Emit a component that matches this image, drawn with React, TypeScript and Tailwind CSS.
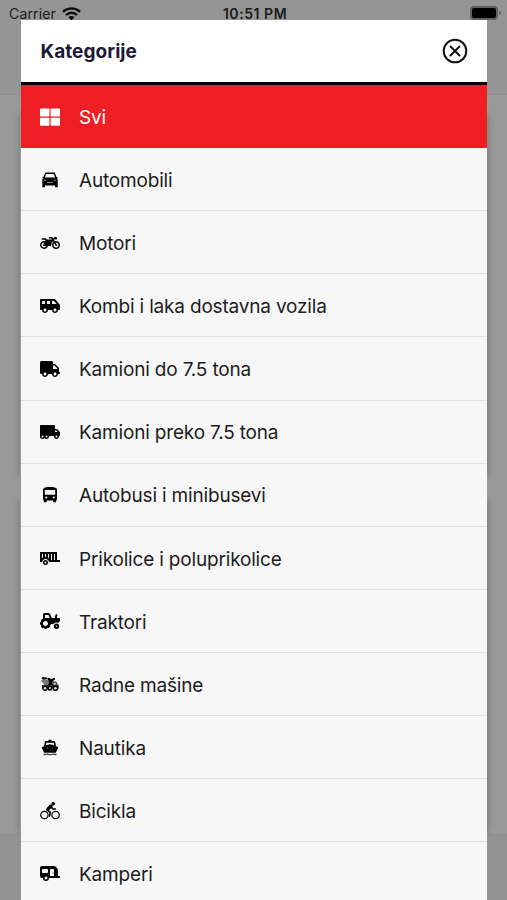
import type { ReactNode } from 'react';
import {
  FaCaravan,
  FaMotorcycle,
  FaShuttleVan,
  FaTractor,
  FaTrailer,
  FaTruck,
  FaTruckMoving,
} from 'react-icons/fa';

interface Category {
  id: string;
  name: string;
  icon: ReactNode;
}

const GridIcon = () => (
  <svg viewBox="0 0 20 18" className="w-5 h-[18px]" fill="currentColor">
    <rect x="0" y="0.5" width="9.4" height="8" rx="0.8" />
    <rect x="10.6" y="0.5" width="9.4" height="8" rx="0.8" />
    <rect x="0" y="9.7" width="9.4" height="8" rx="0.8" />
    <rect x="10.6" y="9.7" width="9.4" height="8" rx="0.8" />
  </svg>
);

const CarIcon = () => (
  <svg viewBox="0 0 20 20" className="w-5 h-5">
    <path
      d="M5.2 2.5h9.6l1.7 4.5.9.1.3.9-.7.5.7 1.2v7.5h-2.6v-1.8H4.9v1.8H2.3V9.7L3 8.5l-.7-.5.3-.9.9-.1z"
      fill="currentColor"
    />
    <path d="M6 4h8l1.100 3.500H4.900z" fill="#f7f7f7" />
    <path d="M4 10l2 .5M16 10l-2 .5M7 12.5h6" stroke="#b0b0b0" strokeWidth="0.8" fill="none" />
  </svg>
);

const BusIcon = () => (
  <svg viewBox="0 0 20 20" className="w-5 h-5">
    <path
      fill="currentColor"
      d="M6 2.3C7.5 1.8 12.5 1.8 14 2.3c2 .5 3 1.2 3 2.8v8.7c0 .7-.3 1.2-.8 1.600v1c0 .5-.4.9-.9.9h-1.200c-.5 0-.9-.4-.9-.9v-.8H6.800v.8c0 .5-.4.9-.9.9H4.700c-.5 0-.9-.4-.9-.9v-1c-.5-.4-.8-.9-.8-1.600V5.100C3 3.500 4 2.800 6 2.300z"
    />
    <rect x="4.8" y="5" width="10.4" height="4.800" rx="0.4" fill="#f7f7f7" />
    <circle cx="6.3" cy="12.5" r="1.100" fill="#f7f7f7" />
    <circle cx="13.7" cy="12.5" r="1.100" fill="#f7f7f7" />
  </svg>
);

const MixerIcon = () => (
  <svg viewBox="0 0 20 20" className="w-5 h-5" fill="currentColor">
    <path d="M1.500 4.500L3 2.700l1.800.8 1.500-.5.9 1.800-3 1.600z" />
    <path d="M1 6.600l3.500-1.500 4.500 1 2 3-1 2.400H4.800z" fill="#777" />
    <path d="M7 4.600l1.700-.8 2.600 1.300 3.200-1.400.7 1.600-2.400 1.900-1.200 4H8l1.400-3.600z" />
    <path d="M2 11h9.800l1-3.600h3.400l1.600 3.300 1 .8v3H2z" fill="#2a2a2a" />
    <path d="M13.600 8.600h2l1 2.100h-3.300z" fill="#b8b8b8" />
    <circle cx="5" cy="14.200" r="2.700" />
    <circle cx="10" cy="14.200" r="2.500" />
    <circle cx="15.500" cy="14.200" r="2.800" />
    <circle cx="5" cy="14.200" r="1.300" fill="#e4e4e4" />
    <circle cx="10" cy="14.200" r="1.100" fill="#bbb" />
    <circle cx="15.500" cy="14.200" r="1.300" fill="#e4e4e4" />
  </svg>
);

const FerryIcon = () => (
  <svg viewBox="0 0 20 20" className="w-5 h-5">
    <path
      fill="currentColor"
      d="M8.500 1.800h3V3h2.300c.8 0 1.300.5 1.500 1.200l.7 4 1.900.8c.3.200.3.600.2 1l-2.300 4.800H4.200L1.900 10c-.1-.4-.1-.8.2-1L4 8.200l.7-4C4.900 3.500 5.400 3 6.200 3h2.300z"
    />
    <path d="M6.400 4.700h7.200l.5 2.500L10 6.200 5.900 7.200z" fill="#f7f7f7" />
    <circle cx="7.500" cy="10" r="0.500" fill="#aaa" />
    <circle cx="12.500" cy="10" r="0.500" fill="#aaa" />
    <path d="M3.500 16.300c2 .7 3-.4 4.400 0s2.800.4 4.200 0 2.400.7 4.400 0" stroke="#444" strokeWidth="1.300" fill="none" />
  </svg>
);

const BikeIcon = () => (
  <svg viewBox="0 0 20 20" className="w-5 h-5" fill="none" stroke="currentColor">
    <circle cx="4.400" cy="14" r="3.700" strokeWidth="1.200" />
    <circle cx="15.600" cy="14" r="3.700" strokeWidth="1.200" />
    <circle cx="13.300" cy="2.800" r="1.800" fill="currentColor" stroke="none" />
    <path d="M11 5L7.600 8.400" strokeWidth="3.200" strokeLinecap="round" />
    <path d="M7.300 9l3 2.300-.8 4" strokeWidth="1.600" strokeLinecap="round" strokeLinejoin="round" />
    <path d="M11.200 5.600l1.500 2.400h2.700" strokeWidth="1.500" strokeLinecap="round" strokeLinejoin="round" />
  </svg>
);

const CloseIcon = () => (
  <svg viewBox="0 0 26 26" className="w-[26px] h-[26px]" fill="none" stroke="#111" strokeWidth="2">
    <circle cx="13" cy="13" r="11.3" />
    <path d="M8.500 8.500l9 9M17.500 8.500l-9 9" strokeLinecap="round" />
  </svg>
);

const WifiIcon = () => (
  <svg viewBox="0 0 19 14" className="w-[19px] h-[14px]" fill="none" stroke="#0c0c0c" strokeWidth="2.3">
    <path d="M1 4.900c4.800-4.600 12.200-4.600 17 0" />
    <path d="M4 8c3.200-3 7.800-3 11 0" />
    <path d="M6.400 10.300c1.800-1.600 4.400-1.600 6.200 0L9.500 13.500z" fill="#0c0c0c" stroke="none" />
  </svg>
);

const categories: Category[] = [
  { id: 'all', name: 'Svi', icon: <GridIcon /> },
  { id: 'cars', name: 'Automobili', icon: <CarIcon /> },
  { id: 'motorcycles', name: 'Motori', icon: <FaMotorcycle className="w-5 h-4" /> },
  { id: 'vans', name: 'Kombi i laka dostavna vozila', icon: <FaShuttleVan className="w-5 h-4" /> },
  { id: 'trucks', name: 'Kamioni do 7.5 tona', icon: <FaTruck className="w-5 h-4" /> },
  { id: 'heavy-trucks', name: 'Kamioni preko 7.5 tona', icon: <FaTruckMoving className="w-5 h-4" /> },
  { id: 'buses', name: 'Autobusi i minibusevi', icon: <BusIcon /> },
  { id: 'trailers', name: 'Prikolice i poluprikolice', icon: <FaTrailer className="w-5 h-4" /> },
  { id: 'tractors', name: 'Traktori', icon: <FaTractor className="w-5 h-4" /> },
  { id: 'machines', name: 'Radne mašine', icon: <MixerIcon /> },
  { id: 'boats', name: 'Nautika', icon: <FerryIcon /> },
  { id: 'bicycles', name: 'Bicikla', icon: <BikeIcon /> },
  { id: 'campers', name: 'Kamperi', icon: <FaCaravan className="w-5 h-4" /> },
];

function StatusBar() {
  return (
    <div className="flex h-[95px] items-start border-b border-[#8e8e8e] bg-[#959595] px-[9px] pt-[5px] text-[14px] leading-[18px] text-[#1c1c1c]">
      <div className="flex flex-1 items-center gap-[6px] tracking-[0.15px]">
        <span>Carrier</span>
        <WifiIcon />
      </div>
      <span className="font-semibold tracking-[0.55px]">10:51 PM</span>
      <div className="-mr-[3px] flex flex-1 items-center justify-end pt-px">
        <div className="h-[14px] w-[28px] rounded-[4px] border-2 border-[#606060] bg-black" />
        <div className="ml-px h-1 w-[2px] rounded-r bg-[#606060]" />
      </div>
    </div>
  );
}

export default function App() {
  const selected = 'all';

  return (
    <div className="relative h-[900px] w-full overflow-hidden bg-[#999999] font-['Inter','Liberation_Sans',sans-serif]">
      <StatusBar />

      {/* Listing cards behind the dialog */}
      <div className="flex flex-col gap-[24px] px-[20px] pt-[20px]">
        <div className="h-[361px] shadow-[0_0_7px_rgba(0,0,0,0.25)]" />
        <div className="h-[332px] shadow-[0_0_7px_rgba(0,0,0,0.25)]" />
      </div>
      <div className="mt-px h-[70px] bg-[#939393]" />

      {/* Category dialog */}
      <div className="absolute top-[19.5px] right-[19.6px] bottom-0 left-[20.5px] overflow-hidden bg-[#f7f7f7]">
        <div className="flex h-[65.6px] items-center justify-between border-b-[3px] border-black bg-white pr-[19.5px] pl-5">
          <h2 className="pt-[2px] text-[19px] font-bold tracking-[0.05px] text-[#1b1838]">Kategorije</h2>
          <button className="mt-px">
            <CloseIcon />
          </button>
        </div>
        <ul>
          {categories.map(category => (
            <li
              key={category.id}
              className={`flex h-[63.1px] items-center border-b pl-[19.5px] text-[19px] ${
                category.id === selected
                  ? 'border-[#ef1e25] bg-[#ef1e25] text-white'
                  : 'border-[#e0e0e0] text-black'
              }`}
            >
              <span className="flex w-5 shrink-0 justify-center pt-px">{category.icon}</span>
              <span
                className={`ml-[19px] pt-[4px] tracking-[-0.18px] ${
                  category.id === selected ? '' : 'text-[#1c1c1c]'
                }`}
              >
                {category.name}
              </span>
            </li>
          ))}
        </ul>
      </div>
    </div>
  );
}
